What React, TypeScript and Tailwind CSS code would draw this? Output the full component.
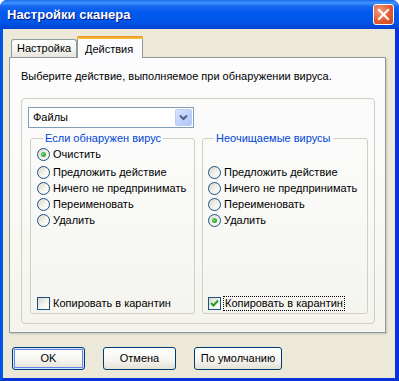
import React from "react";

const font = "font-['Tahoma','Liberation_Sans',sans-serif]";

function Radio({ checked, label }: { checked?: boolean; label: string }) {
  return (
    <div className="flex h-[16px] items-center">
      <span className="flex h-[13px] w-[13px] shrink-0 items-center justify-center rounded-full border border-[#1C5180] bg-[linear-gradient(135deg,#D8D5CC_0%,#F4F3EE_55%,#FFFFFF_100%)]">
        {checked && (
          <span className="h-[5px] w-[5px] rounded-full bg-[radial-gradient(circle_at_40%_40%,#7EE07E_0%,#2AAA2A_60%,#1B8F1B_100%)]" />
        )}
      </span>
      <span className="ml-[3px] whitespace-nowrap">{label}</span>
    </div>
  );
}

function Checkbox({ checked, focused, label }: { checked?: boolean; focused?: boolean; label: string }) {
  return (
    <div className="flex h-[16px] items-center">
      <span className="flex h-[13px] w-[13px] shrink-0 items-center justify-center border border-[#1C5180] bg-[linear-gradient(135deg,#D8D5CC_0%,#F4F3EE_55%,#FFFFFF_100%)]">
        {checked && (
          <svg width="9" height="9" viewBox="0 0 9 9">
            <path d="M1 4 L3.5 6.5 L8 1.5" fill="none" stroke="#21A121" strokeWidth="2" />
          </svg>
        )}
      </span>
      <span
        className={
          focused
            ? "ml-[2px] whitespace-nowrap border border-dotted border-black px-[1px] leading-[13px]"
            : "ml-[3px] whitespace-nowrap"
        }
      >
        {label}
      </span>
    </div>
  );
}

function Button({ label, width, isDefault }: { label: string; width: string; isDefault?: boolean }) {
  return (
    <button
      className={`${width} h-[23px] rounded-[3px] border border-[#003C74] bg-[linear-gradient(to_bottom,#FFFFFF_0%,#F5F4EF_60%,#E3E1D6_100%)] text-[11px] text-black ${
        isDefault ? "shadow-[inset_0_0_0_1px_#CEE7FF,inset_0_0_0_2px_#6982EE]" : ""
      }`}
    >
      {label}
    </button>
  );
}

export default function App() {
  return (
    <div className={`${font} flex h-[381px] w-[399px] flex-col overflow-hidden rounded-t-[7px] bg-[#0A3FD8] text-[11px] text-black`}>
      {/* Title bar */}
      <div className="flex h-[29px] shrink-0 items-center bg-[linear-gradient(to_bottom,#1A6AEE_0%,#3F94FF_10%,#1767EE_22%,#0058EE_45%,#0056E8_75%,#0049D8_92%,#003FD0_100%)] pl-[7px] pr-[5px]">
        <span className="font-['Liberation_Sans',sans-serif] text-[13px] font-bold text-white [text-shadow:1px_1px_0_#0A1883]">
          Настройки сканера
        </span>
        <div className="ml-auto flex h-[21px] w-[21px] items-center justify-center rounded-[3px] border border-white bg-[radial-gradient(circle_at_30%_30%,#F39A7C_0%,#E45A2E_55%,#C8431C_100%)]">
          <svg width="13" height="13" viewBox="0 0 13 13">
            <path d="M2 2 L11 11 M11 2 L2 11" stroke="white" strokeWidth="2.2" strokeLinecap="square" />
          </svg>
        </div>
      </div>

      {/* Body */}
      <div className="flex flex-1 flex-col border-b-[3px] border-l-[3px] border-r-[4px] border-b-[#0831D9] border-l-[#0055E5] border-r-[#0831D9] bg-[#ECE9D8]">
        {/* Tabs */}
        <div className="ml-[8px] mt-[7px] flex h-[21px] items-end">
          <div className="flex h-[18px] w-[66px] items-center rounded-t-[3px] border border-b-0 border-[#919B9C] bg-[linear-gradient(to_bottom,#FFFFFF_0%,#F3F3EF_60%,#E6E5DD_100%)] pl-[5px]">
            Настройка
          </div>
          <div className="relative -mb-[1px] flex h-[22px] w-[66px] flex-col rounded-t-[3px] border border-b-0 border-[#919B9C] bg-[#FCFCFE]">
            <div className="h-[3px] rounded-t-[2px] bg-[linear-gradient(to_bottom,#E68B2C,#FFC73C)] -mx-[1px] -mt-[1px]" />
            <div className="pl-[7px] pt-[2px]">Действия</div>
          </div>
        </div>

        {/* Tab panel */}
        <div className="ml-[6px] flex h-[276px] w-[377px] flex-col border border-[#919B9C] bg-[linear-gradient(to_bottom,#FCFCFE_0%,#F9F9F7_50%,#F4F3EE_100%)] shadow-[1px_1px_0_#D0CEBF,2px_2px_0_#E0DED2]">
          <div className="ml-[11px] mt-[12px] leading-[13px]">Выберите действие, выполняемое при обнаружении вируса.</div>

          <div className="ml-[11px] mt-[15px] flex h-[226px] w-[354px] flex-col rounded-[4px] border border-[#D0D0BF] pl-[6px] pt-[8px]">
            {/* Combobox */}
            <div className="flex h-[21px] w-[166px] items-center border border-[#7F9DB9] bg-white pl-[4px]">
              <span>Файлы</span>
              <div className="ml-auto mr-[1px] flex h-[17px] w-[17px] items-center justify-center rounded-[2px] border border-[#B9CCF4] bg-[linear-gradient(135deg,#D9E5FD_0%,#C1D3FB_50%,#B0C7F8_100%)]">
                <svg width="9" height="7" viewBox="0 0 9 7">
                  <path d="M1 1.5 L4.5 5 L8 1.5" fill="none" stroke="#4D6185" strokeWidth="2" />
                </svg>
              </div>
            </div>

            <div className="ml-[2px] mt-[4px] flex gap-[7px]">
              <fieldset className="flex h-[182px] w-[165px] flex-col rounded-[3px] border border-[#D0D0BF] pb-[2px] pl-[6px]">
                <legend className="ml-[6px] px-[2px] leading-[13px] text-[#0046D5]">Если обнаружен вирус</legend>
                <div className="mt-[1px] flex flex-col">
                  <div className="mb-[2px]">
                    <Radio checked label="Очистить" />
                  </div>
                  <Radio label="Предложить действие" />
                  <Radio label="Ничего не предпринимать" />
                  <Radio label="Переименовать" />
                  <Radio label="Удалить" />
                </div>
                <div className="mt-auto">
                  <Checkbox label="Копировать в карантин" />
                </div>
              </fieldset>

              <fieldset className="flex h-[182px] w-[166px] flex-col rounded-[3px] border border-[#D0D0BF] pb-[2px] pl-[5px]">
                <legend className="ml-[6px] px-[2px] leading-[13px] text-[#0046D5]">Неочищаемые вирусы</legend>
                <div className="mt-[19px]">
                  <Radio label="Предложить действие" />
                  <Radio label="Ничего не предпринимать" />
                  <Radio label="Переименовать" />
                  <Radio checked label="Удалить" />
                </div>
                <div className="mt-auto">
                  <Checkbox checked focused label="Копировать в карантин" />
                </div>
              </fieldset>
            </div>
          </div>
        </div>

        {/* Buttons */}
        <div className="ml-[9px] mt-[14px] flex gap-[18px]">
          <Button label="OK" width="w-[73px]" isDefault />
          <Button label="Отмена" width="w-[73px]" />
          <Button label="По умолчанию" width="w-[88px]" />
        </div>
      </div>
    </div>
  );
}
